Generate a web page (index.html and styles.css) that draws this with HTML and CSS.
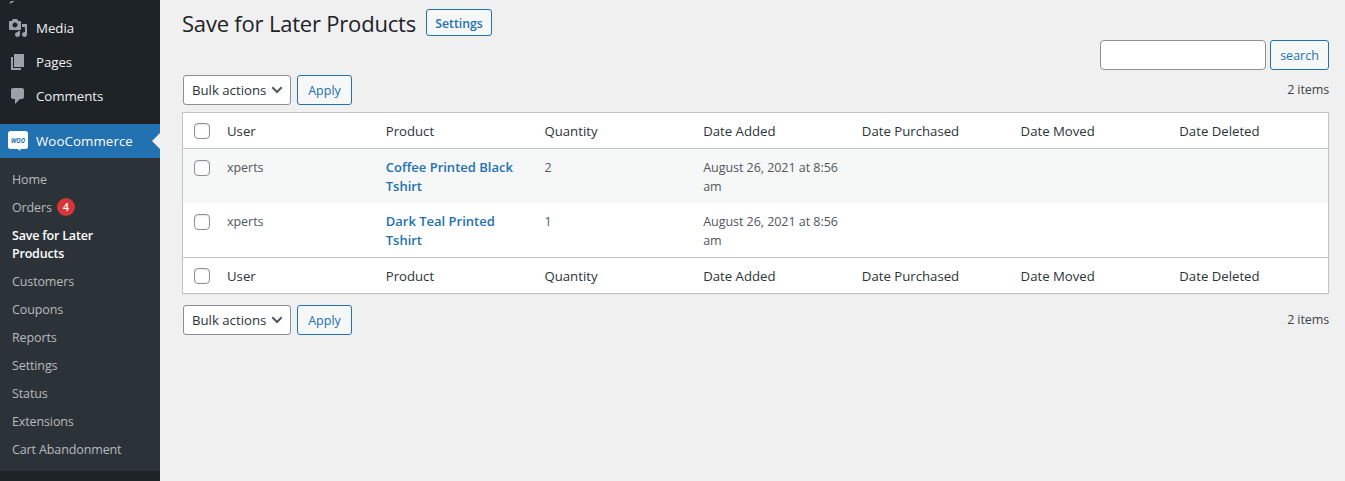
FILE: index.html
```html
<!DOCTYPE html>
<html lang="en">
<head>
<meta charset="utf-8">
<title>Save for Later Products</title>
<link rel="stylesheet" href="styles.css">
</head>
<body>
<div class="layout">
  <nav class="sidebar">
    <div class="previous-item"><svg width="20" height="3" viewBox="0 0 20 3"><path d="M1.2 2.7 3 0h3.5L4 1.8z"/></svg></div>
    <a class="menu-item"><svg class="icon" viewBox="0 0 20 20"><path fill-rule="evenodd" d="M13 11V4c0-.55-.45-1-1-1h-1.67L9 1H5L3.67 3H2c-.55 0-1 .45-1 1v7c0 .55.45 1 1 1h10c.55 0 1-.45 1-1zM7 4.5c1.38 0 2.5 1.12 2.5 2.5S8.38 9.5 7 9.5 4.5 8.38 4.5 7 5.62 4.5 7 4.5zM14 6h5v10.5c0 1.38-1.12 2.5-2.5 2.5S14 17.88 14 16.5s1.12-2.5 2.5-2.5c.17 0 .34.02.5.05V9h-3V6zm-4 8.05V13h2v3.5c0 1.38-1.12 2.5-2.5 2.5S7 17.88 7 16.5 8.12 14 9.500 14c.17 0 .34.02.5.05z"/></svg><span>Media</span></a>
    <a class="menu-item"><svg class="icon" viewBox="0 0 20 20"><path d="M6 15V2h10v13H6zm-1 1h8v2H3V5h2v11z"/></svg><span>Pages</span></a>
    <a class="menu-item"><svg class="icon" viewBox="0 0 20 20"><path d="M5 2h9c1.1 0 2 .9 2 2v7c0 1.1-.9 2-2 2h-2l-5 5v-5H5c-1.1 0-2-.9-2-2V4c0-1.1.9-2 2-2z"/></svg><span>Comments</span></a>
    <a class="menu-item current"><svg class="icon woo" viewBox="0 0 20 20"><path d="M2.500 0h15A2.500 2.500 0 0 1 20 2.500v12.900a2.500 2.500 0 0 1-2.500 2.500h-5.300l.3 2.100-2.900-2.100H2.500A2.500 2.500 0 0 1 0 15.400V2.500A2.500 2.500 0 0 1 2.500 0z"/><text class="woo-text" x="3" y="11.500" textLength="14" lengthAdjust="spacingAndGlyphs">WOO</text></svg><span>WooCommerce</span></a>
    <div class="submenu">
      <a>Home</a>
      <a class="orders">Orders <b class="badge">4</b></a>
      <a class="active">Save for Later<br>Products</a>
      <a>Customers</a>
      <a>Coupons</a>
      <a>Reports</a>
      <a>Settings</a>
      <a>Status</a>
      <a>Extensions</a>
      <a>Cart Abandonment</a>
    </div>
  </nav>
  <main class="content">
    <header class="heading"><h1>Save for Later Products</h1><a class="button page-action">Settings</a></header>
    <div class="search"><input type="text" aria-label="Search"><button class="button">search</button></div>
    <div class="tablenav">
      <div class="select"><span>Bulk actions</span><svg viewBox="0 0 12 8"><path d="m1.300 1.300 4.700 4.700 4.700-4.700"/></svg></div><button class="button apply">Apply</button>
      <span class="count">2 items</span>
    </div>
    <div class="table">
      <div class="row labels head"><i class="check"></i><span>User</span><span>Product</span><span>Quantity</span><span>Date Added</span><span>Date Purchased</span><span>Date Moved</span><span>Date Deleted</span></div>
      <div class="row item alternate"><i class="check"></i><span>xperts</span><a>Coffee Printed Black<br>Tshirt</a><span>2</span><span>August 26, 2021 at 8:56<br>am</span></div>
      <div class="row item"><i class="check"></i><span>xperts</span><a>Dark Teal Printed<br>Tshirt</a><span>1</span><span>August 26, 2021 at 8:56<br>am</span></div>
      <div class="row labels foot"><i class="check"></i><span>User</span><span>Product</span><span>Quantity</span><span>Date Added</span><span>Date Purchased</span><span>Date Moved</span><span>Date Deleted</span></div>
    </div>
    <div class="tablenav bottom">
      <div class="select"><span>Bulk actions</span><svg viewBox="0 0 12 8"><path d="m1.300 1.300 4.700 4.700 4.700-4.700"/></svg></div><button class="button apply">Apply</button>
      <span class="count">2 items</span>
    </div>
  </main>
</div>
</body>
</html>
```
FILE: styles.css
```css
* { box-sizing: border-box; }
body {
  margin: 0;
  background: #f0f0f1;
  color: #3c434a;
  font: 12.5px/19px "Open Sans", "Noto Sans", sans-serif;
}
.layout { display: flex; height: 481px; overflow: hidden; background: #f0f0f0; }
.sidebar { width: 160px; flex: none; background: #1d2327; }
.previous-item { height: 11px; padding-left: 8px; line-height: 0; }
.previous-item svg { fill: #9ca2a7; }
.menu-item {
  display: flex;
  align-items: center;
  height: 34px;
  padding-left: 8px;
  gap: 8px;
  color: #f0f0f1;
  font-size: 13.3px;
  letter-spacing: -.05px;
}
.icon { width: 20px; height: 20px; fill: #9ca2a7; }
.current { position: relative; margin-top: 11px; background: #2271b1; color: #fff; letter-spacing: .08px; }
.current::after {
  content: "";
  position: absolute;
  right: 0;
  top: 9px;
  border: solid transparent;
  border-width: 8px 8px 8px 0;
  border-right-color: #f0f0f0;
}
.woo { fill: #fff; }
.woo-text { fill: #2271b1; font: italic 700 7.8px "Open Sans", sans-serif; letter-spacing: 0; }
.submenu { padding: 7px 0 8px; background: #2c3338; }
.submenu a {
  display: block;
  padding: 6px 12px 4px;
  color: #b7babd;
  font-size: 12.5px;
  line-height: 18px;
  letter-spacing: -.12px;
}
.submenu .orders { display: flex; gap: 5px; }
.submenu .active { color: #fff; font-weight: 600; letter-spacing: -.2px; }
.badge {
  width: 18px;
  height: 18px;
  margin-top: -1px;
  border-radius: 9px;
  background: #d63638;
  color: #fff;
  text-align: center;
  font-size: 11px;
  font-weight: 600;
}
.content { flex: 1; padding: 9px 16px 0 22px; }
.heading { display: flex; height: 31px; gap: 10px; }
h1 {
  width: 234px;
  margin: 0;
  color: #1d2327;
  font-size: 22px;
  font-weight: 400;
  line-height: 28px;
  letter-spacing: -.2px;
  white-space: nowrap;
}
.button {
  height: 30px;
  padding: 1px 10px 0;
  border: 1px solid #2271b1;
  border-radius: 3px;
  background: #f6f7f7;
  color: #2271b1;
  font: 12.5px/27px "Open Sans", sans-serif;
}
.page-action { width: 66px; height: 27px; padding: 0; text-align: center; font-size: 12.3px; font-weight: 600; line-height: 27px; }
.search { display: flex; justify-content: flex-end; gap: 4px; }
.search input { width: 166px; height: 30px; border: 1px solid #8c8f94; border-radius: 4px; background: #fff; }
.search .button { width: 59px; padding: 1px 0 0; }
.tablenav { display: flex; align-items: center; height: 30px; margin: 5px 0 7px; padding-left: 1px; }
.select {
  display: flex;
  align-items: center;
  justify-content: space-between;
  width: 108px;
  height: 30px;
  padding: 0 7px 0 8px;
  border: 1px solid #8c8f94;
  border-radius: 3px;
  background: #fff;
  color: #2c3338;
  font-size: 13.2px;
  white-space: nowrap;
}
.select svg { width: 12px; height: 8px; fill: none; stroke: #50575e; stroke-width: 2; }
.apply { width: 55px; margin-left: 6px; padding: 1px 0 0; }
.count { margin-left: auto; padding-bottom: 2px; letter-spacing: -.1px; }
.table { border: 1px solid #c3c4c7; background: #fff; box-shadow: 0 1px 1px rgba(0, 0, 0, .04); }
.row { display: grid; grid-template-columns: 34px repeat(7, 1fr); color: #50575e; }
.row > span, .row > a { padding-left: 10px; white-space: nowrap; }
.check { width: 16px; height: 16px; margin-left: 11px; border: 1px solid #8c8f94; border-radius: 4px; background: #fff; box-shadow: inset 0 1px 2px rgba(0, 0, 0, .1); }
.labels { height: 36px; align-items: center; color: #2c3338; font-size: 13.2px; }
.labels > span { padding-top: 1px; }
.head { border-bottom: 1px solid #c3c4c7; }
.foot { border-top: 1px solid #c3c4c7; }
.item { height: 54px; padding-top: 9px; letter-spacing: -.04px; }
.item .check { margin-top: 2px; }
.item a { color: #2271b1; font-size: 13px; font-weight: 600; letter-spacing: 0; }
.alternate { background: #f6f7f7; }
.bottom { margin-top: 11px; }
```
